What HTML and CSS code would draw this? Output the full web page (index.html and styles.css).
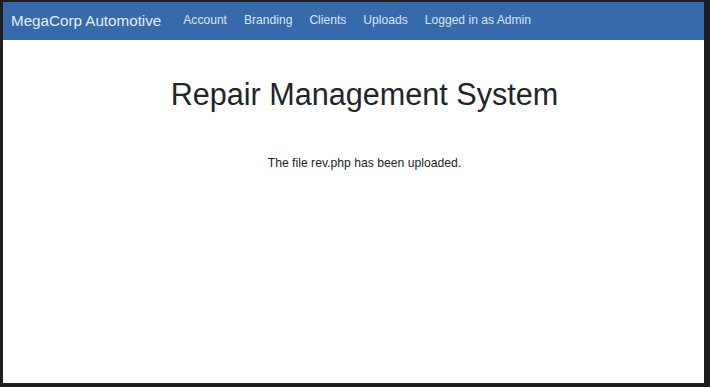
FILE: index.html
```html
<!DOCTYPE html>
<html lang="en">
<head>
  <meta charset="UTF-8" />
  <meta name="viewport" content="width=device-width, initial-scale=1.0" />
  <title>Repair Management System</title>
  <link rel="stylesheet" href="styles.css">
</head>
<body>
  <div class="window">
    <nav class="navbar">
      <a href="#" class="brand">MegaCorp Automotive</a>
      <div class="nav-links">
        <a href="#">Account</a>
        <a href="#">Branding</a>
        <a href="#">Clients</a>
        <a href="#">Uploads</a>
        <a href="#">Logged in as Admin</a>
      </div>
    </nav>
    <main class="content">
      <h1>Repair Management System</h1>
      <p>The file rev.php has been uploaded.</p>
    </main>
  </div>
</body>
</html>
```

FILE: styles.css
```css
html, body {
  height: 100%;
}
body {
  margin: 0;
  background: #1e1e1e;
  font-family: 'Liberation Sans', Arial, sans-serif;
  color: #212529;
  box-sizing: border-box;
  padding: 2px 6px 4px 3px;
}
.window {
  background: #fff;
  height: 100%;
  display: flex;
  flex-direction: column;
}
.navbar {
  display: flex;
  align-items: center;
  height: 38px;
  background: #376aab;
  padding: 0 8px 2px;
  box-sizing: border-box;
}
.brand {
  color: #e6eefa;
  text-decoration: none;
  font-size: 15.2px;
  margin-right: 22px;
}
.nav-links {
  display: flex;
  gap: 17px;
}
.nav-links a {
  color: #dbe5f4;
  text-decoration: none;
  font-size: 12.1px;
}
.content {
  flex: 1;
  text-align: center;
  padding-left: 22px;
}
.content h1 {
  font-size: 30.6px;
  font-weight: normal;
  margin: 36px 0 0;
  line-height: 36px;
}
.content p {
  font-size: 12.2px;
  margin: 44px 0 0;
}
```
